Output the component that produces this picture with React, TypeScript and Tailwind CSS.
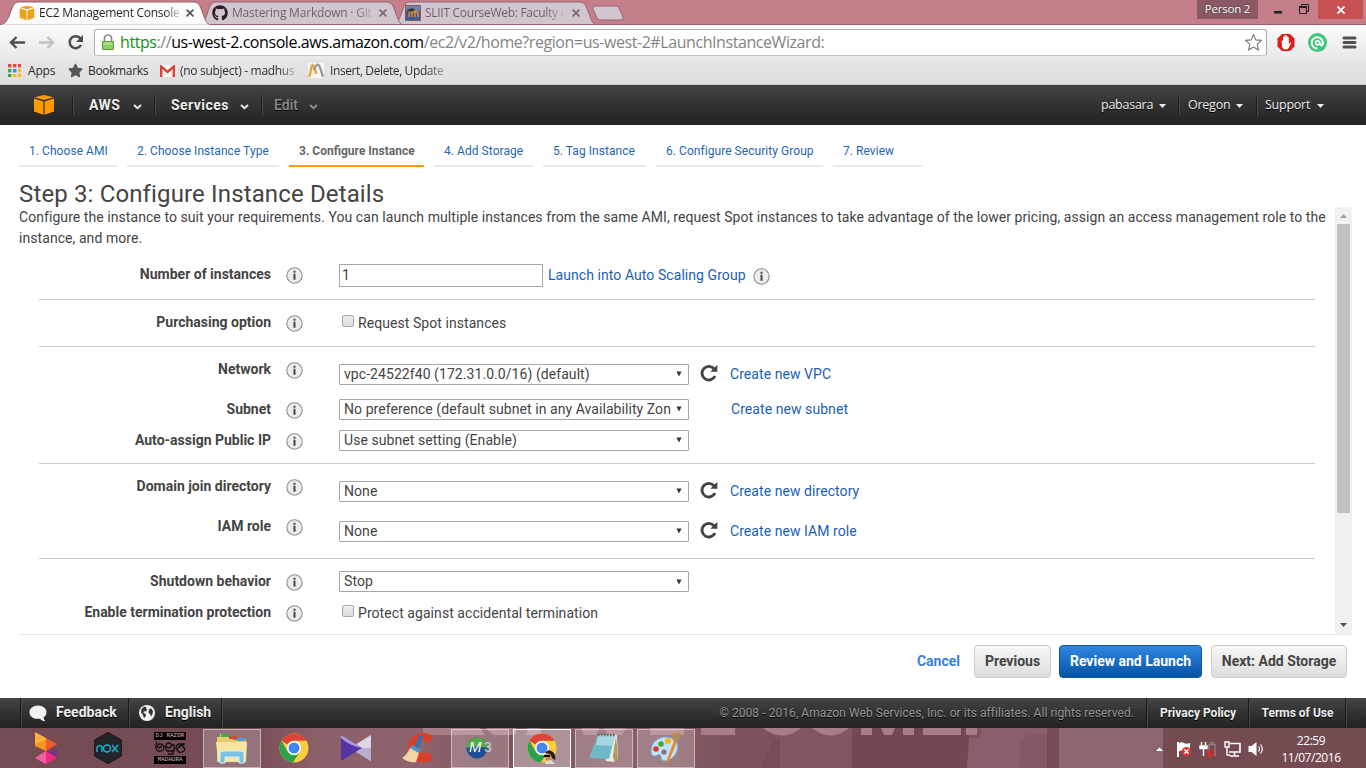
import React from "react";
import { FaGithub, FaStar } from "react-icons/fa";

const ROBOTO = "font-['Roboto','Liberation_Sans',sans-serif]";
const SEGOE = "font-['Open_Sans','Noto_Sans',sans-serif]";

function Cube({ size, color }: { size: number; color: string }) {
  return (
    <svg width={size} height={size} viewBox="0 0 22 22" fill={color} className="shrink-0">
      <path d="M1.5 3.2 11 1l9.500 2.200L11 6z" />
      <path d="M1 4.500 10.400 7.400v13.400L1 17.600z" />
      <path d="M21 4.500 11.600 7.400v13.400L21 17.600z" />
    </svg>
  );
}

function CloseX({ dark }: { dark?: boolean }) {
  return (
    <svg width="8" height="8" viewBox="0 0 8 8" className="shrink-0">
      <path d="M.6.6l6.800 6.800M7.400.6.6 7.400" stroke={dark ? "#555" : "#77686f"} strokeWidth="1.700" />
    </svg>
  );
}

function TabStrip() {
  return (
    <div className={`relative flex h-[25px] shrink-0 bg-[#c57f8b] ${SEGOE}`}>
      <svg className="absolute left-0 top-0" width="1366" height="25">
        <path d="M390 25C397 25 398 22 400 17L404 6Q406 2 409 2H580Q584 2 586 6L591 19Q593 25 598 25z" fill="#d1c6d0" stroke="#9a6470" />
        <path d="M197 25C203 25 204 22 206 17L210 6Q212 2 215 2H387Q391 2 393 6L398 19Q400 25 405 25z" fill="#d1c6d0" stroke="#9a6470" />
        <path d="M0 24.500H1366" stroke="#94606b" />
        <path d="M-2 25C5 25 7 21 9 16L13 6Q15 2 18 2H194Q198 2 200 6L205 19Q207 25 212 25z" fill="#fbfbfb" stroke="#9a6470" />
        <path d="M2 25.500H209" stroke="#fbfbfb" strokeWidth="2" />
        <path d="M593 9Q592 6 595 6H615Q618 6 619 8L623 17Q624 20 621 20H601Q598 20 597 18z" fill="#d1c6d0" stroke="#9a6470" />
      </svg>
      <div className="relative flex h-[25px] w-[212px] items-center pl-[19px]">
        <Cube size={16} color="#eba31c" />
        <span className="ml-[4px] w-[140px] whitespace-nowrap bg-linear-to-r from-[#222] from-90% to-[#222]/20 bg-clip-text text-[12px] tracking-[-0.27px] text-transparent">EC2 Management Console</span>
        <span className="ml-[7px]"><CloseX dark /></span>
      </div>
      <div className="relative flex h-[25px] w-[193px] items-center">
        <FaGithub size={16} color="#2f1d23" className="shrink-0" />
        <span className="ml-[4px] w-[139px] whitespace-nowrap bg-linear-to-r from-[#6b5c63] from-88% to-[#6b5c63]/30 bg-clip-text text-[12px] tracking-[-0.2px] text-transparent">Mastering Markdown · Git</span>
        <span className="ml-[8px]"><CloseX /></span>
      </div>
      <div className="relative flex h-[25px] w-[200px] items-center">
        <svg width="16" height="16" viewBox="0 0 16 16" className="shrink-0">
          <path d="M0 0h16v16H0z" fill="#8a5a5a" /><path d="M1 1h14v14H1z" fill="#3e5a96" /><path d="M1 1h14v5H1z" fill="#7182b0" />
          <path d="M4 12V7.500q1.500-2 3 0V12M7 7.500q2-2 3 0V12M10 7.500q2-2 3 0V12" fill="none" stroke="#e8892b" strokeWidth="1.500" /><path d="M2 5l5-1.500 3 1.500-4 1.500zM3 5v4" fill="#333" stroke="#333" strokeWidth=".5" />
        </svg>
        <span className="ml-[4px] w-[139px] whitespace-nowrap bg-linear-to-r from-[#6b5c63] from-86% to-[#6b5c63]/15 bg-clip-text text-[12px] tracking-[-0.28px] text-transparent">SLIIT CourseWeb: Faculty o</span>
        <span className="ml-[8px]"><CloseX /></span>
      </div>
      <div className="relative ml-auto flex h-[19px]">
        <div className="flex h-[19px] w-[61px] items-center justify-center bg-[#8b5962] pb-px text-[11.500px] tracking-[-0.2px] text-white [text-shadow:0_0_2px_#333]">Person 2</div>
        <svg width="60" height="19" viewBox="0 0 60 19">
          <path d="M16 11h8v2.500h-8z" fill="#222" />
          <path d="M41.500 6.500h7v7h-7zM43.500 6V4.500h7v7H49" fill="none" stroke="#222" />
          <path d="M41 6h8v2h-8z" fill="#222" />
        </svg>
        <div className="flex h-[19px] w-[45px] items-center justify-center bg-[#c75050]">
          <svg width="8" height="8"><path d="M.5.500l7 7M7.500.500l-7 7" stroke="#fff" strokeWidth="1.800" /></svg>
        </div>
        <div className="w-[3px]" />
      </div>
    </div>
  );
}

function Toolbar() {
  return (
    <div className={`relative flex h-[34px] shrink-0 items-center bg-linear-to-b from-[#fbfbfb] to-[#e9e9e9] ${SEGOE}`}>
      <svg width="94" height="34" viewBox="0 0 94 34" className="shrink-0">
        <path d="M11 17.500h14M16.500 12l-5.500 5.500 5.500 5.500" fill="none" stroke="#4d4d4d" strokeWidth="2.400" />
        <path d="M39 17.500h14M47.500 12l5.500 5.500-5.500 5.500" fill="none" stroke="#c2c2c2" strokeWidth="2.400" />
        <path d="M80.500 13.500A6 6 0 1 0 81 20" fill="none" stroke="#4d4d4d" strokeWidth="2.500" />
        <path d="M83 10v7h-7z" fill="#4d4d4d" />
      </svg>
      <div className="flex h-[27px] w-[1173px] items-center rounded-[3px] border border-[#adadad] border-b-[#c5c5c5] bg-white pl-[7px] pr-[3px]">
        <svg width="12" height="16" viewBox="0 0 12 16" className="shrink-0">
          <path d="M2.500 8V4a3.500 3 0 0 1 7 0v4" fill="none" stroke="#8f8f8f" strokeWidth="1.700" />
          <path d="M.5 7.500h11v8H.5z" fill="#8ccf62" stroke="#5b9e3a" />
          <path d="M1.500 8.500h9v2h-9z" fill="#b4e297" />
        </svg>
        <div className="ml-[6px] grow whitespace-nowrap text-[16px] tracking-[-0.43px] text-[#848484]">
          <span className="text-[#0d9310]">https</span>://<span className="text-black">us-west-2.console.aws.amazon.com</span>/ec2/v2/home?region=us-west-2#LaunchInstanceWizard:
        </div>
        <svg width="19" height="19" viewBox="0 0 19 19"><path d="M9.500 1.500l2.300 5.400 5.700.5-4.300 3.800 1.300 5.800-5-3-5 3 1.300-5.800L1.500 7.400l5.700-.5z" fill="#fff" stroke="#777" strokeWidth="1.100" strokeLinejoin="round" /></svg>
      </div>
      <svg width="99" height="34" viewBox="0 0 99 34">
        <path d="M15 9h8l4.500 4.500v8L23 26h-8l-4.500-4.500v-8z" fill="#dc1f1c" />
        <path d="M14.500 16q1-.8 1.500 0v1.500V12q.8-1 1.400 0v4-5.500q.8-1 1.500 0V16v-5q.8-1 1.500 0v5-3.500q.8-1 1.400 0V19q1.500-2 2.400-1.200L22 22.500l-1.500 1.700h-3.700l-1.600-2z" fill="#fff" />
        <circle cx="50.500" cy="17.500" r="9.500" fill="#3bc87a" />
        <path d="M50.500 23.500a5.600 5.600 0 1 1 5.200-4.300q-.8 1.800-2 .8-.7-.6-.7-2.500" fill="none" stroke="#fff" strokeWidth="2" /><circle cx="50.500" cy="17.800" r="2" fill="none" stroke="#fff" strokeWidth="1.600" />
        <path d="M77 13h11M77 17.500h11M77 22h11" stroke="#505050" strokeWidth="3" strokeLinecap="round" />
      </svg>
    </div>
  );
}

function Bookmarks() {
  const dots = ["#e8453c", "#e8453c", "#e8453c", "#34a853", "#4285f4", "#fbbc05", "#34a853", "#fbbc05", "#fbbc05"];
  return (
    <div className={`flex h-[26px] shrink-0 items-center border-b border-[#c8c8c8] bg-linear-to-b from-[#e6e6e6] to-[#dfdfdf] pb-[2px] pl-[8px] text-[12px] text-[#2a2a2a] ${SEGOE}`}>
      <svg width="13" height="13" viewBox="0 0 13 13">
        {dots.map((c, i) => <rect key={i} x={(i % 3) * 5} y={Math.floor(i / 3) * 5} width="3.400" height="3.400" fill={c} />)}
      </svg>
      <span className="ml-[7px] w-[40px] tracking-[-0.2px]">Apps</span>
      <FaStar size={15} color="#555" />
      <span className="ml-[5px] w-[71px] tracking-[-0.35px]">Bookmarks</span>
      <svg width="15" height="12" viewBox="0 0 15 12" className="ml-px">
        <path d="M0 0h15v12H0z" fill="#f4f4f4" /><path d="M1.200 12V1.500L7.500 7l6.300-5.500V12" fill="none" stroke="#d9453a" strokeWidth="2.400" />
      </svg>
      <span className="ml-[5px] w-[116px] whitespace-nowrap bg-linear-to-r from-[#2a2a2a] from-85% to-[#2a2a2a]/20 bg-clip-text tracking-[-0.3px] text-transparent">(no subject) - madhus</span>
      <svg width="16" height="15" viewBox="0 0 16 15" className="ml-[12px]">
        <path d="M0 0h16v15H0z" fill="#f7f7f7" /><path d="M1 14C3 10 3 2 4.500 2S7 7 8.500 11" fill="none" stroke="#e9a53a" strokeWidth="2.500" /><path d="M6 7C8 2 9 1 10.500 2S13 8 15 14" fill="none" stroke="#999" strokeWidth="2.300" />
      </svg>
      <span className="ml-[6px] w-[118px] whitespace-nowrap bg-linear-to-r from-[#2a2a2a] from-82% to-[#2a2a2a]/20 bg-clip-text tracking-[-0.4px] text-transparent">Insert, Delete, Update</span>
    </div>
  );
}

const Divider = () => <div className="h-[20px] w-[2px] shrink-0 border-l border-[#1c1c1c] bg-[#4a4a4a]" />;
const Chevron = ({ color = "#eee" }: { color?: string }) => (
  <svg width="9" height="6" viewBox="0 0 9 6" className="mt-[3px] shrink-0"><path d="M1 1l3.500 3.200L8 1" fill="none" stroke={color} strokeWidth="2" /></svg>
);
const Caret = () => <svg width="7" height="4" className="ml-[5px] shrink-0"><path d="M0 0h7L3.500 4z" fill="#eee" /></svg>;

function AwsNav() {
  return (
    <div className={`flex h-[40px] shrink-0 items-center bg-linear-to-b from-[#444] to-[#222] text-[14px] font-bold text-[#eee] [text-shadow:0_1px_0_#000] ${ROBOTO}`}>
      <div className="flex w-[72px] justify-start pl-[33px]"><Cube size={22} color="#f90" /></div>
      <Divider />
      <div className="flex w-[80px] items-center pl-[15px]"><span className="w-[44px] tracking-[0.5px]">AWS</span><Chevron /></div>
      <Divider />
      <div className="flex w-[105px] items-center pl-[15px]"><span className="w-[69px] tracking-[0.45px]">Services</span><Chevron /></div>
      <Divider />
      <div className="flex items-center pl-[11px]"><span className="w-[35px] font-medium text-[#8c8c8c]">Edit</span><Chevron color="#8c8c8c" /></div>
      <div className={`ml-auto flex items-center pr-[42px] pt-px text-[12.500px] font-normal ${SEGOE}`}>
        <div className="flex items-center"><span className="w-[53px] tracking-[-0.25px]">pabasara</span><Caret /><span className="w-[12px]" /></div>
        <Divider />
        <div className="flex items-center pl-[8px]"><span className="w-[43px] tracking-[-0.25px]">Oregon</span><Caret /><span className="w-[13px]" /></div>
        <Divider />
        <div className="flex items-center pl-[7px]"><span className="w-[47px] tracking-[-0.25px]">Support</span><Caret /></div>
      </div>
    </div>
  );
}

function Step({ label, w, active }: { label: string; w: string; active?: boolean }) {
  return (
    <div className={`${w} flex h-[33px] items-center whitespace-nowrap border-b-2 pl-[10px] pt-[2px] text-[12px] ${active ? "border-[#ff9900] font-bold text-[#666]" : "border-[#eaeaea] tracking-[0.055px] text-[#1f66b5]"}`}>{label}</div>
  );
}

function Info() {
  return (
    <svg width="17" height="17" viewBox="0 0 17 17" className="shrink-0">
      <circle cx="8.500" cy="8.500" r="7.700" fill="#ececec" stroke="#8f8f8f" strokeWidth="1.100" />
      <path d="M7.500 3.700h2v2h-2zM7.500 6.800h2v6h-2z" fill="#444" />
    </svg>
  );
}

function Row({ label, h, shift = "", children }: { label: string; h: string; shift?: string; children: React.ReactNode }) {
  return (
    <div className={`flex items-center ${h}`}>
      <div className={`flex items-center ${shift}`}>
        <div className="w-[232px] whitespace-nowrap pb-px text-right font-bold tracking-normal">{label}</div>
        <div className="ml-[15px] mr-[36px] pt-px"><Info /></div>
      </div>
      {children}
    </div>
  );
}

function Select({ value }: { value: string }) {
  return (
    <div className="flex h-[21px] w-[350px] shrink-0 items-center justify-between whitespace-nowrap rounded-[1px] border border-[#a6a6a6] bg-white pl-[4px] pr-[6px]">
      <span>{value}</span>
      <svg width="6" height="6" viewBox="0 0 7 6"><path d="M.5 0h6L3.500 6z" fill="#333" /></svg>
    </div>
  );
}

function Refresh() {
  return (
    <svg width="18" height="18" viewBox="0 0 18 18" className="-mt-[2px] ml-[11px] shrink-0">
      <path d="M14.300 5.200A6.800 6.800 0 1 0 15 12" fill="none" stroke="#444" strokeWidth="2.900" />
      <path d="M17.300.8v7h-7z" fill="#444" />
    </svg>
  );
}

const Check = () => <div className="ml-[3px] mr-[4px] h-[12px] w-[12px] shrink-0 -translate-y-[2px] rounded-[2px] border border-[#a9a9a9] bg-linear-to-b from-[#eee] to-[#ddd]" />;
const Link = ({ children, m }: { children: string; m: string }) => <span className={`${m} whitespace-nowrap text-[#1a5fb4]`}>{children}</span>;

function Page() {
  return (
    <div className={`flex min-h-0 grow flex-col bg-white pl-[19px] text-[14px] tracking-[0.065px] text-[#444] ${ROBOTO}`}>
      <div className="mt-[9px] flex h-[33px] shrink-0 gap-[10px] tracking-normal">
        <Step label="1. Choose AMI" w="w-[98px]" />
        <Step label="2. Choose Instance Type" w="w-[152px]" />
        <Step label="3. Configure Instance" w="w-[135px]" active />
        <Step label="4. Add Storage" w="w-[99px]" />
        <Step label="5. Tag Instance" w="w-[103px]" />
        <Step label="6. Configure Security Group" w="w-[167px]" />
        <Step label="7. Review" w="w-[90px]" />
      </div>
      <h1 className="mt-[12px] h-[28px] shrink-0 text-[24px] leading-[30px] tracking-[0.14px]">Step 3: Configure Instance Details</h1>
      <div className="flex h-[428px] w-[1333px] shrink-0 border-b border-[#e6e6e6]">
        <div className="w-[1316px]">
          <p className="h-[42px] whitespace-nowrap leading-[21px]">
            Configure the instance to suit your requirements. You can launch multiple instances from the same AMI, request Spot instances to take advantage of the lower pricing, assign an access management role to the<br />instance, and more.
          </p>
          <div className="ml-[20px] w-[1276px]">
            <div className="border-b border-[#ccc]">
              <Row label="Number of instances" h="h-[50px] pt-[2px]">
                <div className="flex h-[23px] w-[204px] items-center border border-[#a6a6a6] pl-[2px]">1</div>
                <Link m="ml-[5px] mr-[7px]">Launch into Auto Scaling Group</Link>
                <div className="pt-[3px]"><Info /></div>
              </Row>
            </div>
            <div className="border-b border-[#ccc]">
              <Row label="Purchasing option" h="h-[46px]"><Check />Request Spot instances</Row>
            </div>
            <div className="border-b border-[#ccc] pb-[7px] pt-[7px]">
              <Row label="Network" h="h-[40px]" shift="pb-[8px]"><Select value="vpc-24522f40 (172.31.0.0/16) (default)" /><Refresh /><Link m="ml-[12px]">Create new VPC</Link></Row>
              <Row label="Subnet" h="h-[30px]" shift="pt-[2px]"><Select value="No preference (default subnet in any Availability Zon" /><Link m="ml-[42px]">Create new subnet</Link></Row>
              <Row label="Auto-assign Public IP" h="h-[32px]" shift="pt-px"><Select value="Use subnet setting (Enable)" /></Row>
            </div>
            <div className="border-b border-[#ccc] pb-[7px] pt-[7px]">
              <Row label="Domain join directory" h="h-[40px]" shift="pb-[8px]"><Select value="None" /><Refresh /><Link m="ml-[12px]">Create new directory</Link></Row>
              <Row label="IAM role" h="h-[40px]" shift="pb-[8px]"><Select value="None" /><Refresh /><Link m="ml-[12px]">Create new IAM role</Link></Row>
            </div>
            <div className="pt-[7px]">
              <Row label="Shutdown behavior" h="h-[31px]"><Select value="Stop" /></Row>
              <Row label="Enable termination protection" h="h-[31px]"><Check /><span className="pt-[2px]">Protect against accidental termination</span></Row>
            </div>
          </div>
        </div>
        <div className="flex w-[17px] flex-col items-center bg-[#f1f1f1]">
          <svg width="17" height="17" className="shrink-0"><path d="M5 11h7L8.500 7z" fill="#a3a3a3" /></svg>
          <div className="h-[289px] w-[13px] bg-[#c1c1c1]" />
          <svg width="17" height="17" className="mt-auto shrink-0"><path d="M5 6h7L8.500 10z" fill="#505050" /></svg>
        </div>
      </div>
      <div className="flex h-[53px] shrink-0 items-center justify-end pr-[19px] font-bold tracking-normal">
        <span className="mr-[14px] text-[#3b7fdb]">Cancel</span>
        <div className="flex h-[33px] w-[77px] items-center justify-center rounded-[4px] border border-[#ccc] bg-linear-to-b from-[#f8f8f8] to-[#ddd] text-[#444]">Previous</div>
        <div className="ml-[8px] flex h-[33px] w-[143px] items-center justify-center whitespace-nowrap rounded-[4px] border border-[#0d55a6] bg-linear-to-b from-[#2f87e0] to-[#0453a8] text-white">Review and Launch</div>
        <div className="ml-[9px] flex h-[33px] w-[136px] items-center justify-center whitespace-nowrap rounded-[4px] border border-[#ccc] bg-linear-to-b from-[#f8f8f8] to-[#ddd] text-[#444]">Next: Add Storage</div>
      </div>
    </div>
  );
}

const FootDivider = () => <div className="h-full w-[2px] shrink-0 border-l border-[#1c1c1c] bg-[#484848]" />;

function Footer() {
  return (
    <div className={`flex h-[30px] shrink-0 items-center bg-linear-to-b from-[#444] to-[#222] pl-[20px] text-[14px] font-bold text-[#eee] [text-shadow:0_1px_0_#000] ${ROBOTO}`}>
      <FootDivider />
      <div className="flex w-[106px] items-center pl-[7px]">
        <svg width="18" height="17" viewBox="0 0 18 17"><path d="M9 0.500c5 0 8.500 3 8.500 6.700 0 2.300-1.200 4-3 5.200.2 1.500.8 2.700 1.800 3.800-2.400 0-4-.9-5.300-2.500C4.500 14.500.5 11.500.5 7.200.5 3.500 4 .5 9 .5z" fill="#f2f2f2" /></svg>
        <span className="ml-[9px] pb-px">Feedback</span>
      </div>
      <FootDivider />
      <div className="flex w-[91px] items-center pl-[9px]">
        <svg width="16" height="16" viewBox="0 0 16 16"><circle cx="8" cy="8" r="8" fill="#f2f2f2" /><path d="M2.500 4 5 1.800 7.500 2 7 3.500 8.300 5 6.500 6.500 4.800 6.200 4.500 8l2.200 1 .3 1.500-1.500 2.500-1-1L4 10 2 7.500zM10 4.500l2-1.200 2 2.700-.5 3-1.500 2.500-1-2.500L9.500 7.500z" fill="#333" /></svg>
        <span className="ml-[10px] pb-px">English</span>
      </div>
      <FootDivider />
      <span className="ml-auto mr-[12px] whitespace-nowrap text-[12px] font-normal tracking-[0.065px] text-[#999]">© 2008 - 2016, Amazon Web Services, Inc. or its affiliates. All rights reserved.</span>
      <FootDivider />
      <span className="w-[100px] whitespace-nowrap text-center text-[12px]">Privacy Policy</span>
      <FootDivider />
      <span className="w-[95px] whitespace-nowrap text-center text-[12px]">Terms of Use</span>
      <FootDivider />
      <div className="w-[19px]" />
    </div>
  );
}

function ChromeIcon() {
  return (
    <svg width="30" height="30" viewBox="0 0 30 30">
      <circle cx="15" cy="15" r="14.500" fill="#fbcd3c" />
      <path d="M2.400 7.800A14.500 14.500 0 0 1 27.600 7.800H15a7.200 7.200 0 0 0-6.300 3.700z" fill="#db4437" />
      <path d="M2.400 7.800A14.500 14.500 0 0 0 13.800 29.500l6.200-9.300a7.200 7.200 0 0 1-11.300-1.800z" fill="#2ba24c" />
      <circle cx="15" cy="15" r="7" fill="#fff" /><circle cx="15" cy="15" r="5.500" fill="#4285f4" />
    </svg>
  );
}

function Slot({ children, state }: { children: React.ReactNode; state?: "open" | "active" }) {
  const look = state === "active" ? "border-white bg-white/35" : state === "open" ? "border-white/45 bg-white/22" : "border-transparent";
  return <div className={`mx-[2px] flex h-[39px] w-[58px] shrink-0 items-center justify-center border ${look}`}>{children}</div>;
}

function Taskbar() {
  return (
    <div className={`relative flex h-[40px] shrink-0 items-center bg-[#7d5059] pl-[15px] ${SEGOE}`}>
      <svg className="absolute left-0 top-0" width="1366" height="40">
        <defs>
          <linearGradient id="wall">
            <stop offset="0" stopColor="#754b54" /><stop offset=".18" stopColor="#754b54" /><stop offset=".23" stopColor="#8a5f68" />
            <stop offset=".31" stopColor="#8f646d" /><stop offset=".36" stopColor="#7c525b" /><stop offset=".46" stopColor="#8a606a" /><stop offset=".53" stopColor="#7d535c" />
          </linearGradient>
        </defs>
        <path d="M0 0h1366v40H0z" fill="url(#wall)" />
        <path d="M720 0h60v40h-60z" fill="#7e535c" /><path d="M762 12l12 0-14 28h20V10z" fill="#774d57" />
        <path d="M780 0h72v40h-72z" fill="#825660" /><path d="M852 0h117v40H852z" fill="#744851" />
        <path d="M969 10h12V0h66v40h-80z" fill="#8a5f6b" /><path d="M1020 16l8-10 19 0v34h-28z" fill="#845965" />
        <path d="M1047 0h12v40h-12z" fill="#754b54" /><path d="M1059 0h104v40h-104z" fill="#8f656d" /><path d="M1163 0h203v40h-203z" fill="#754b52" />
        <g fill="#a97d87">
          <path d="M423 0h57l5 7h-62zM486 0h30v7h-23zM527 0h14v7h-14zM581 0h18l-3 7h-12zM604 0h22l-4 7h-14zM650 0h34v7h-34zM701 0h34v7h-34z" />
          <path d="M763 0h38q-18 15-38 0zM812 0h37q-18 15-37 0zM861 0h11v7h-11zM881 0h14l-3 7h-8zM903 0h11v7h-11zM923 0h38v7h-38zM966 0h11v7h-11z" />
        </g>
      </svg>
      <div className="relative flex">
        <Slot><svg width="24" height="34" viewBox="0 0 24 34"><path d="M1 1 12 7v10L1 13z" fill="#fbb040" /><path d="M12 7l11 6-11 7z" fill="#f15a29" /><path d="M1 13l11-4v11L1 15z" fill="#f7941d" /><path d="M23 17v10L12 21z" fill="#7b3080" /><path d="M1 27l11-7 11 7-11 6z" fill="#ee2a7b" /><path d="M12 20v13L1 27z" fill="#f0609e" /></svg></Slot>
        <Slot><svg width="30" height="32" viewBox="0 0 30 32"><path d="M15 .5 28.500 8v16L15 31.500 1.500 24V8z" fill="#23242c" stroke="#17181d" /><path d="M4 20v-5q3-3 5 0v5M19 13l6 7M25 13l-6 7" fill="none" stroke="#12b5c9" strokeWidth="1.500" /><ellipse cx="14" cy="16.500" rx="3.500" ry="3.500" fill="none" stroke="#12b5c9" strokeWidth="1.500" /></svg></Slot>
        <Slot>
          <div className="flex w-[32px] flex-col items-center font-['Liberation_Mono',monospace] text-[6px] leading-[8px] text-[#d8b8be]">
            <span className="w-full bg-black text-center">DJ RAZOR</span>
            <svg width="32" height="16" viewBox="0 0 32 16" fill="none" stroke="#111" strokeWidth="1.300"><path d="M3 2q-3 6 1 9 6 1 6-4-1-4-5-3-3 3 0 4 3 0 2-3M12 6q0-3 3-3t2 3-4 1 0 4h7V5h-3M14 14h5v-3M22 9q0-5 4-5h5M30 5q-5 0-7 5 2 4 7 1 2-4-2-4" /></svg>
            <span className="w-full bg-black text-center">MADHURA</span>
          </div>
        </Slot>
        <Slot state="open"><svg width="34" height="32" viewBox="0 0 34 32"><path d="M2 5h3V2h9v3h4v3h13v22H2z" fill="#e8ca6c" /><path d="M6 2h8v3H6z" fill="#3fae49" /><path d="M14 4h8v3h-8z" fill="#d84a32" /><path d="M22 6h8v3h-8z" fill="#4aa3df" /><path d="M1 10h31l-1 20H3z" fill="#f7e5a0" /><path d="M5 22q0-3 3-3h18q3 0 3 3v9h-5v-6H10v6H5z" fill="#7cc0e2" stroke="#d5f0fb" /></svg></Slot>
        <Slot><ChromeIcon /></Slot>
        <Slot><svg width="32" height="28" viewBox="0 0 32 28"><path d="M31 1v26L10 14z" fill="#dcd6e6" /><path d="M31 14v13L10 14z" fill="#b9aece" /><path d="M1 1l21 13L1 27z" fill="#5533a5" /><path d="M1 1l21 13Q10 12 1 4z" fill="#a99bd8" /></svg></Slot>
        <Slot><svg width="34" height="32" viewBox="0 0 34 32"><path d="M32 5Q26 0 20 1 8 3 7 15t11 15q8 2 14-3l-5-8q-4 4-8 1-4-5 0-10 4-3 8 1z" fill="#d8402c" /><path d="M19 3l3 1-4 12-4-2z" fill="#2277bb" /><path d="M11 13l9 5-1 3-10-5z" fill="#3b9ad6" /><path d="M9 16l9 5-3 9q-8 1-14-4 5-3 8-10z" fill="#f3d6a4" /></svg></Slot>
        <Slot state="open">
          <svg width="32" height="28" viewBox="0 0 32 28"><circle cx="13" cy="14" r="10.500" fill="#1d4d92" /><path d="M2.500 14a10.500 10.500 0 0 1 21 0q-10-3-21 0z" fill="#4fae45" /><text x="5" y="18" fontSize="15" fontStyle="italic" fill="#fff" fontFamily="Liberation Sans">M</text><text x="20" y="18" fontSize="14" fill="#cbd3dd" fontFamily="Liberation Sans">3</text></svg>
        </Slot>
        <Slot state="active"><div className="relative"><ChromeIcon /><svg className="absolute -bottom-px left-[16px]" width="14" height="14" viewBox="0 0 14 14"><path d="M2 3q3-5 8-1 3 3 2 8l-3-2-2-4z" fill="#2b1a16" /><path d="M2 4h5l2 4-2 4H4L2 8z" fill="#c98958" /><path d="M1 5h6v2H1z" fill="#111" /><path d="M3 11l5-1 4 4H2z" fill="#ddd" /></svg></div></Slot>
        <Slot state="open"><svg width="32" height="32" viewBox="0 0 32 32"><path d="M12 3h17l1 24-4 3-8-1z" fill="#e9eae4" /><path d="M28 4l2 23-4 3-1-6z" fill="#b29a5c" /><path d="M10 3h17l-6 24-20-1z" fill="#6db9c9" /><path d="M10 3h17l-3 11-16-1z" fill="#a7d8e0" /><path d="M10 3h18" stroke="#666" strokeWidth="2.500" strokeDasharray="1.500 1.500" /></svg></Slot>
        <Slot state="open"><svg width="34" height="34" viewBox="0 0 34 34"><path d="M2 20Q2 9 14 6q14-1 15 9-1 12-12 15-6 0-5-5-2-3-5 0-5 1-5-5z" fill="#c4e2f4" stroke="#6fa9d0" /><circle cx="7" cy="18" r="2.800" fill="#d9392e" /><circle cx="12" cy="13" r="2.800" fill="#43a83e" /><circle cx="19" cy="10" r="3" fill="#f2b71f" /><circle cx="15" cy="21" r="2.600" fill="#7d6f86" /><path d="M25 10l3 1-9 21-2-1z" fill="#e88a2b" /><path d="M23 3q4-3 9-1-1 6-5 9l-3-1z" fill="#b58c55" /></svg></Slot>
      </div>
      <svg className="relative ml-auto shrink-0" width="114" height="40" viewBox="0 0 114 40">
        <path d="M5 23.500h9L9.500 19z" fill="#fff" stroke="#444" strokeWidth=".6" />
        <path d="M28 14v15" stroke="#fff" strokeWidth="2" /><path d="M29 15q3-1.500 5 0t6 0v8q-3 1-6 0t-5 0z" fill="#fff" /><circle cx="36.500" cy="23.500" r="4.500" fill="#e0332a" /><path d="M34.500 21.500l4 4M38.500 21.500l-4 4" stroke="#fff" strokeWidth="1.500" />
        <path d="M51.500 14v3M55.500 14v3M50 18h7v2.500h-7zM53.500 21v7" fill="#fff" stroke="#fff" strokeWidth="1.400" /><path d="M59 16.500h6v11h-6zM60 14.800h4" fill="none" stroke="#8c7f82" strokeWidth="1.400" /><path d="M57 22l7 7M64 22l-7 7" stroke="#e02020" strokeWidth="1.800" />
        <path d="M80 15.500h10v8.500H79M84.500 24v4M80 28h9" fill="none" stroke="#fff" strokeWidth="1.600" /><path d="M75 14h4v5h-4zM77 19v8h3" fill="none" stroke="#fff" strokeWidth="1.400" />
        <path d="M98.500 18h3l5-4v14l-5-4h-3z" fill="#fff" /><path d="M108.500 18.500q2 2.500 0 5M110.500 16.500q3.500 4.500 0 9" fill="none" stroke="#fff" strokeWidth="1.200" />
      </svg>
      <div className="relative ml-[6px] mr-[14px] flex w-[82px] flex-col items-center pt-px text-[12px] leading-[17px] tracking-[-0.45px] text-white"><span>22:59</span><span>11/07/2016</span></div>
    </div>
  );
}

export default function App() {
  return (
    <div className="flex h-[768px] w-[1366px] flex-col overflow-hidden bg-white">
      <TabStrip />
      <Toolbar />
      <Bookmarks />
      <AwsNav />
      <Page />
      <Footer />
      <Taskbar />
    </div>
  );
}
